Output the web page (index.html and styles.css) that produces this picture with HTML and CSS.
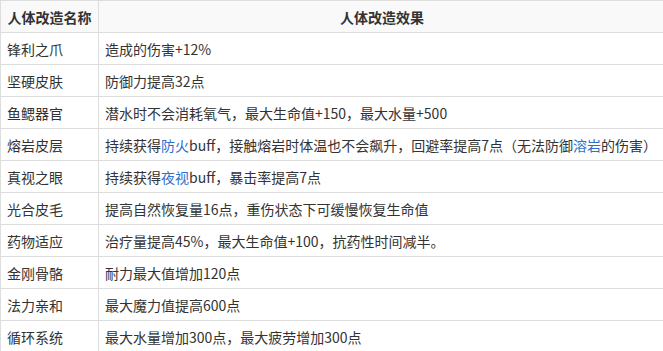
FILE: index.html
```html
<!DOCTYPE html>
<html lang="zh-CN">
<head>
<meta charset="utf-8">
<link rel="stylesheet" href="styles.css">
</head>
<body>
<table class="mods">
  <thead>
    <tr><th class="c-name">人体改造名称</th><th class="c-eff">人体改造效果</th></tr>
  </thead>
  <tbody>
    <tr><td>锋利之爪</td><td>造成的伤害+12%</td></tr>
    <tr><td>坚硬皮肤</td><td>防御力提高32点</td></tr>
    <tr><td>鱼鳃器官</td><td>潜水时不会消耗氧气，最大生命值+150，最大水量+500</td></tr>
    <tr><td>熔岩皮层</td><td>持续获得<a class="lnk">防火</a>buff，接触熔岩时体温也不会飙升，回避率提高7点（无法防御<a class="lnk">溶岩</a>的伤害）</td></tr>
    <tr><td>真视之眼</td><td>持续获得<a class="lnk">夜视</a>buff，暴击率提高7点</td></tr>
    <tr><td>光合皮毛</td><td>提高自然恢复量16点，重伤状态下可缓慢恢复生命值</td></tr>
    <tr><td>药物适应</td><td>治疗量提高45%，最大生命值+100，抗药性时间减半。</td></tr>
    <tr><td>金刚骨骼</td><td>耐力最大值增加120点</td></tr>
    <tr><td>法力亲和</td><td>最大魔力值提高600点</td></tr>
    <tr><td>循环系统</td><td>最大水量增加300点，最大疲劳增加300点</td></tr>
  </tbody>
</table>
</body>
</html>
```

FILE: styles.css
```css
html, body {
  margin: 0;
  padding: 0;
  background: #ffffff;
}
body {
  font-family: "Noto Sans CJK SC", "Noto Sans", sans-serif;
  font-size: 14px;
  color: #333333;
}
.mods {
  border-collapse: collapse;
  width: 666px;
  table-layout: fixed;
}
.mods th, .mods td {
  border: 1px solid #dddddd;
  height: 31px;
  padding: 0 6px;
  line-height: 20px;
  vertical-align: middle;
  white-space: nowrap;
  box-sizing: border-box;
}
.mods tr { height: 32px; }
.mods th {
  background: #f9f9f9;
  font-weight: bold;
  text-align: center;
  color: #333333;
}
.mods td { text-align: left; }
.c-name { width: 98px; }
.lnk {
  color: #2f6fce;
  text-decoration: none;
}
```
